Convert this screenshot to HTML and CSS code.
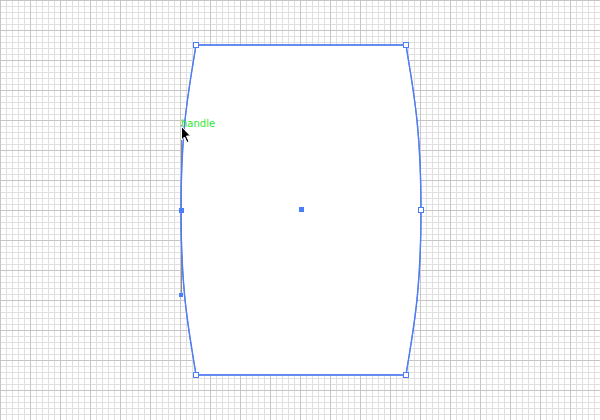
FILE: index.html
```html
<!DOCTYPE html>
<html>
<head>
<meta charset="utf-8">
<link rel="stylesheet" href="styles.css">
</head>
<body>
<div class="canvas">
  <svg class="art" width="600" height="420" viewBox="0 0 600 420" xmlns="http://www.w3.org/2000/svg">
    <path class="shape" d="M196,45 L406,45 C413,90 421,125 421,210 C421,295 413,330 406,375 L196,375 C189,330 181,295 181,210 C181,125 189,90 196,45 Z"/>
    <line class="handle-line" x1="181.5" y1="125" x2="181.5" y2="295"/>
    <path class="sel" d="M196,45 L406,45 C413,90 421,125 421,210 C421,295 413,330 406,375 L196,375 C189,330 181,295 181,210 C181,125 189,90 196,45 Z"/>
    <rect class="pt-hollow" x="193.5" y="42.5" width="5" height="5"/>
    <rect class="pt-hollow" x="403.5" y="42.5" width="5" height="5"/>
    <rect class="pt-hollow" x="193.5" y="372.5" width="5" height="5"/>
    <rect class="pt-hollow" x="403.5" y="372.5" width="5" height="5"/>
    <rect class="pt-hollow" x="418.5" y="207.5" width="5" height="5"/>
    <rect class="pt-fill" x="179" y="208" width="5" height="5"/>
    <rect class="pt-fill" x="299" y="207" width="5" height="5"/>
    <rect class="pt-fill" x="179" y="293" width="4" height="4"/>
    <text class="label" x="181" y="126.5">handle</text>
    <path class="cursor" d="M181.5,126.5 L181.5,140 L184.5,137 L187,142.5 L189,141.5 L186.5,136 L190.5,136 Z"/>
  </svg>
</div>
</body>
</html>
```

FILE: styles.css
```css
html, body {
  margin: 0;
  padding: 0;
  background: #ffffff;
}
.canvas {
  width: 600px;
  height: 420px;
  overflow: hidden;
  background-color: #ffffff;
  background-image:
    linear-gradient(to right, #c6c6c6 1px, transparent 1px),
    linear-gradient(to bottom, #c6c6c6 1px, transparent 1px),
    linear-gradient(to right, #e0e0e0 1px, transparent 1px),
    linear-gradient(to bottom, #e0e0e0 1px, transparent 1px);
  background-size: 30px 30px, 30px 30px, 6px 6px, 6px 6px;
  background-position: 0 0;
}
.art {
  display: block;
}
.shape {
  fill: #ffffff;
  stroke: #777777;
  stroke-width: 1;
}
.handle-line {
  stroke: #8a8a8a;
  stroke-width: 1;
}
.sel {
  fill: none;
  stroke: #4a7dff;
  stroke-width: 1.4;
}
.pt-hollow {
  fill: #ffffff;
  stroke: #4a7dff;
  stroke-width: 1;
}
.pt-fill {
  fill: #4a7dff;
}
.label {
  font-family: "DejaVu Sans", sans-serif;
  font-size: 10px;
  fill: #2ee82e;
}
.cursor {
  fill: #000000;
  stroke: #ffffff;
  stroke-width: 1;
  stroke-linejoin: miter;
}
```
